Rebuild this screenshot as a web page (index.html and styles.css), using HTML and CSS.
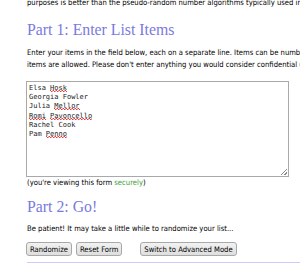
FILE: index.html
```
<!DOCTYPE html>
<html>
<head>
    <title>List Randomizer</title>
    <meta charset="UTF-8">
    <link rel="stylesheet" href="styles.css">
</head>
<body>
    <div class="content">
        <p class="intro">purposes is better than the pseudo-random number algorithms typically used in computer programs.</p>

        <h2>Part 1: Enter List Items</h2>
        <p class="text">Enter your items in the field below, each on a separate line. Items can be numbers, names, email addresses, etc. A maximum of 10,000<br>items are allowed. Please don't enter anything you would consider confidential (e.g., passwords).</p>

        <form class="list-form">
            <div class="items" contenteditable="true" spellcheck="false">
                <div>Elsa <span class="typo">Hosk</span></div>
                <div>Georgia Fowler</div>
                <div>Julia <span class="typo">Mellor</span></div>
                <div><span class="typo">Romi</span> <span class="typo">Pavoncello</span></div>
                <div>Rachel Cook</div>
                <div>Pam <span class="typo">Penno</span></div>
            </div>
            <div class="secure-note">(you're viewing this form <span class="secure">securely</span>)</div>

            <h2 class="part-two">Part 2: Go!</h2>
            <p class="text">Be patient! It may take a little while to randomize your list...</p>

            <div class="buttons">
                <button type="button" class="btn">Randomize</button>
                <button type="button" class="btn">Reset Form</button>
                <button type="button" class="btn btn-advanced">Switch to Advanced Mode</button>
            </div>
        </form>
        <div class="rule"></div>
    </div>
</body>
</html>
```
FILE: styles.css
```
body {
    margin: 0;
    overflow: hidden;
    background: #fff;
    font-family: Tahoma, "DejaVu Sans Condensed", "DejaVu Sans", sans-serif;
    font-size: 7.6px;
    color: #000;
}

.content {
    margin-top: -3px;
    margin-left: 27px;
    width: 273px;
}

.intro,
.text {
    margin: 0;
    line-height: 12px;
    white-space: nowrap;
}

h2 {
    margin: 12px 0 8px;
    font-family: Georgia, "Liberation Serif", serif;
    font-weight: normal;
    font-size: 15.8px;
    line-height: 18px;
    color: #7a7ade;
}

h2.part-two {
    margin: 9px 0 7px;
}

.list-form {
    margin: 0;
}

.items {
    position: relative;
    box-sizing: border-box;
    width: 263px;
    height: 96px;
    margin: 10px 0 0 -1px;
    padding: 2px 2px;
    border: 1px solid #a9a9a9;
    font-family: "DejaVu Sans Mono", "Liberation Mono", monospace;
    font-size: 7px;
    line-height: 9.2px;
    color: #222;
    outline: none;
}

.items::after {
    content: '';
    position: absolute;
    right: 1px;
    bottom: 1px;
    width: 8px;
    height: 8px;
    background: repeating-linear-gradient(135deg, transparent 0, transparent 1.5px, #8a8a8a 1.5px, #8a8a8a 2.5px);
    clip-path: polygon(100% 0, 100% 100%, 0 100%);
}

.typo {
    background-image:
        linear-gradient(45deg, transparent 40%, #e04040 40%, #e04040 60%, transparent 60%),
        linear-gradient(135deg, transparent 40%, #e04040 40%, #e04040 60%, transparent 60%);
    background-size: 3px 2px;
    background-position: 0 100%, 1.5px 100%;
    background-repeat: repeat-x;
}

.secure-note {
    line-height: 12px;
}

.secure {
    color: #3aa13a;
}

.buttons {
    display: flex;
    gap: 4px;
    margin-top: 7px;
    margin-left: -1px;
}

.btn {
    box-sizing: border-box;
    height: 14px;
    padding: 0 3px;
    font-family: inherit;
    font-size: 7.6px;
    color: #000;
    background: linear-gradient(to bottom, #f2f2f2, #dedede);
    border: 1px solid #a8a8a8;
    border-radius: 3px;
}

.btn-advanced {
    margin-left: 14px;
}

.rule {
    margin-top: 6px;
    height: 2px;
    width: 600px;
    background: #ccccfa;
}
```
